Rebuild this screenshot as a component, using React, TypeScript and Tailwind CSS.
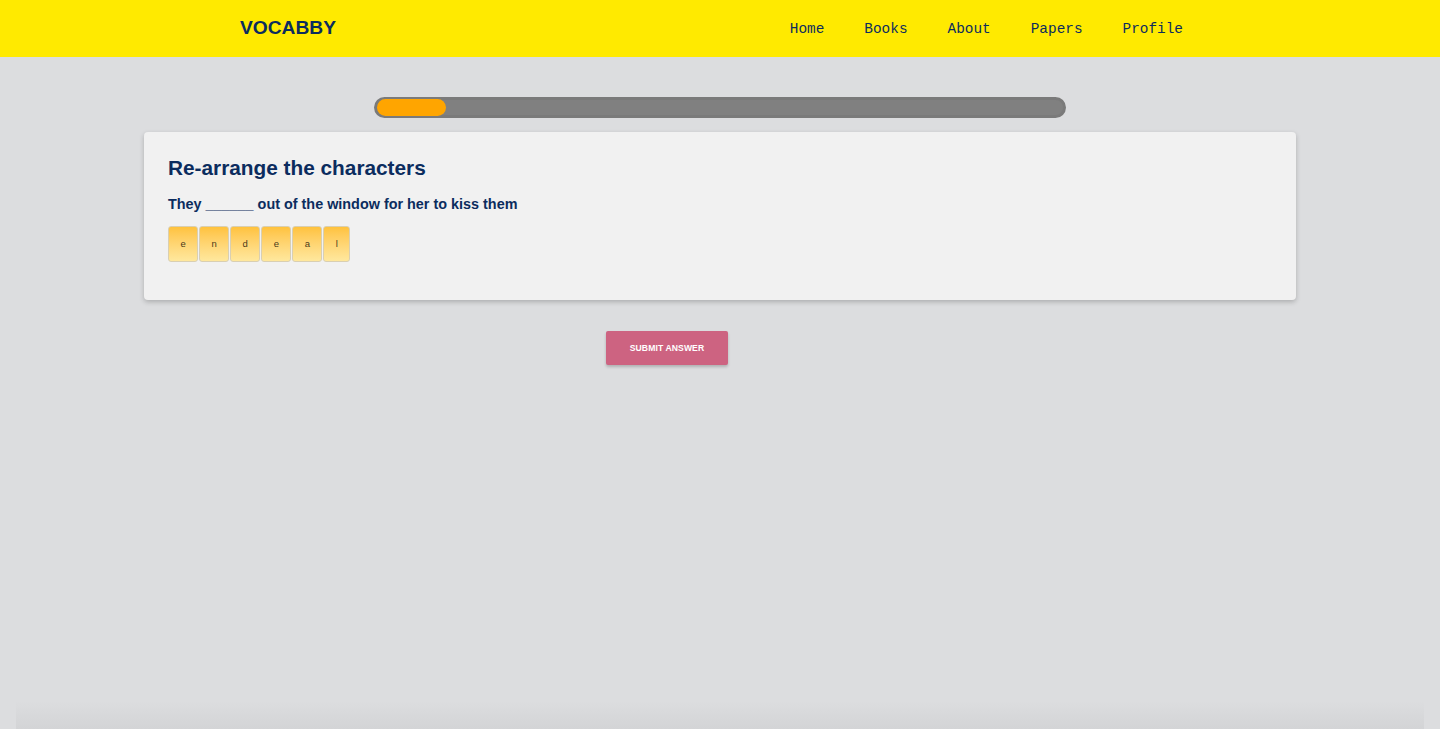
import React from "react";

const letters = ["e", "n", "d", "e", "a", "l"];
const navItems = ["Home", "Books", "About", "Papers", "Profile"];

export default function App() {
  return (
    <div
      className="min-h-[729px] h-[729px] flex flex-col bg-[#dcdddf] overflow-hidden"
      style={{ fontFamily: '"Liberation Sans", Arial, sans-serif' }}
    >
      <header className="h-[57px] bg-[#ffea00] flex items-center justify-between pl-[240px] pr-[237px] shrink-0">
        <div className="text-[19.2px] font-bold text-[#0b2c5e] tracking-normal leading-none pb-[2px]">
          VOCABBY
        </div>
        <nav
          className="flex items-center pt-[2px]"
          style={{ fontFamily: '"Liberation Mono", "Courier New", monospace' }}
        >
          {navItems.map((n) => (
            <a key={n} className="px-5 text-[14.4px] text-[#0b2c5e] leading-none">
              {n}
            </a>
          ))}
        </nav>
      </header>

      <main className="flex-1 flex flex-col items-center">
        <div className="mt-[40px] w-[692px] h-[21px] rounded-full bg-[#808080] border-[3px] border-[#7a7a7a] flex items-center px-0">
          <div className="h-[17px] w-[69px] rounded-full bg-[#ffa500]" />
        </div>

        <div className="mt-[14px] w-[1152px] h-[168px] bg-[#f1f1f1] rounded-[4px] shadow-[0_2px_5px_rgba(0,0,0,0.22)] px-6 pt-[24px]">
          <h1 className="text-[20.8px] font-bold text-[#0b2c5e] leading-[24px]">
            Re-arrange the characters
          </h1>
          <p className="mt-[15px] text-[14.4px] font-bold text-[#0b2c5e] leading-[18px]">
            They ______ out of the window for her to kiss them
          </p>
          <div className="mt-[13px] flex gap-px">
            {letters.map((l, i) => (
              <div
                key={i}
                className="h-[36px] px-[11.4px] flex items-center justify-center rounded-[3px] border border-[#d9cfb2] bg-gradient-to-b from-[#ffc23c] to-[#ffe89d] text-[9.5px] text-[#4a3a1a]"
              >
                {l}
              </div>
            ))}
          </div>
        </div>

        <div className="w-full flex">
          <button className="ml-[606px] mt-[31px] w-[122px] h-[34px] bg-[#cd6381] rounded-[2px] shadow-[0_2px_3px_rgba(0,0,0,0.2)] text-white text-[8.6px] font-bold tracking-[0.1px]">
            SUBMIT ANSWER
          </button>
        </div>
      </main>

      <div className="h-[28px] shrink-0 mx-[16px] bg-gradient-to-b from-[#dcdddf] to-[#d3d4d6]" />
    </div>
  );
}
